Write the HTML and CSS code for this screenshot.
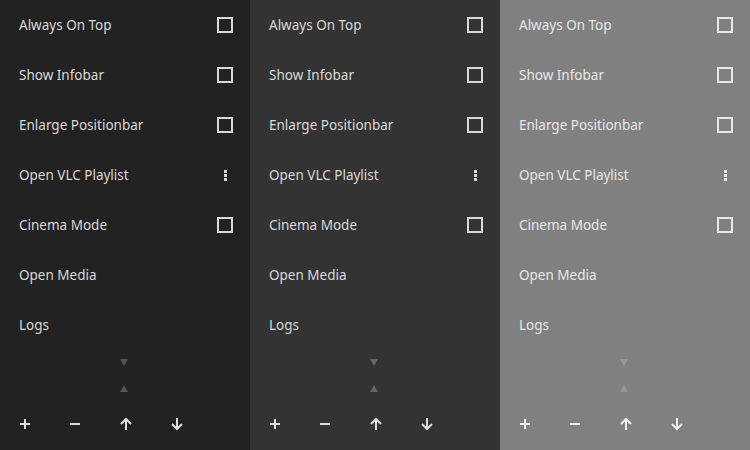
FILE: index.html
```html
<!DOCTYPE html>
<html>
<head>
<meta charset="utf-8">
<link rel="stylesheet" href="styles.css">
</head>
<body>
<div class="panels">
  <div class="panel p1">
    <div class="row"><span>Always On Top</span><span class="cb"></span></div>
    <div class="row"><span>Show Infobar</span><span class="cb"></span></div>
    <div class="row"><span>Enlarge Positionbar</span><span class="cb"></span></div>
    <div class="row"><span>Open VLC Playlist</span><span class="dots"><i></i><i></i><i></i></span></div>
    <div class="row"><span>Cinema Mode</span><span class="cb"></span></div>
    <div class="row"><span>Open Media</span></div>
    <div class="row"><span>Logs</span></div>
    <div class="tri"><span class="down"></span><span class="up"></span></div>
    <div class="tools">
      <span class="tool"><svg width="12" height="12" viewBox="0 0 12 12"><path d="M6 1v10M1 6h10" stroke="currentColor" stroke-width="2"/></svg></span>
      <span class="tool"><svg width="12" height="12" viewBox="0 0 12 12"><path d="M1 6h10" stroke="currentColor" stroke-width="2"/></svg></span>
      <span class="tool"><svg width="12" height="14" viewBox="0 0 12 14"><path d="M6 13V2M1 7l5-5 5 5" stroke="currentColor" stroke-width="2" fill="none"/></svg></span>
      <span class="tool"><svg width="12" height="14" viewBox="0 0 12 14"><path d="M6 1v11M1 7l5 5 5-5" stroke="currentColor" stroke-width="2" fill="none"/></svg></span>
    </div>
  </div>
  <div class="panel p2">
    <div class="row"><span>Always On Top</span><span class="cb"></span></div>
    <div class="row"><span>Show Infobar</span><span class="cb"></span></div>
    <div class="row"><span>Enlarge Positionbar</span><span class="cb"></span></div>
    <div class="row"><span>Open VLC Playlist</span><span class="dots"><i></i><i></i><i></i></span></div>
    <div class="row"><span>Cinema Mode</span><span class="cb"></span></div>
    <div class="row"><span>Open Media</span></div>
    <div class="row"><span>Logs</span></div>
    <div class="tri"><span class="down"></span><span class="up"></span></div>
    <div class="tools">
      <span class="tool"><svg width="12" height="12" viewBox="0 0 12 12"><path d="M6 1v10M1 6h10" stroke="currentColor" stroke-width="2"/></svg></span>
      <span class="tool"><svg width="12" height="12" viewBox="0 0 12 12"><path d="M1 6h10" stroke="currentColor" stroke-width="2"/></svg></span>
      <span class="tool"><svg width="12" height="14" viewBox="0 0 12 14"><path d="M6 13V2M1 7l5-5 5 5" stroke="currentColor" stroke-width="2" fill="none"/></svg></span>
      <span class="tool"><svg width="12" height="14" viewBox="0 0 12 14"><path d="M6 1v11M1 7l5 5 5-5" stroke="currentColor" stroke-width="2" fill="none"/></svg></span>
    </div>
  </div>
  <div class="panel p3">
    <div class="row"><span>Always On Top</span><span class="cb"></span></div>
    <div class="row"><span>Show Infobar</span><span class="cb"></span></div>
    <div class="row"><span>Enlarge Positionbar</span><span class="cb"></span></div>
    <div class="row"><span>Open VLC Playlist</span><span class="dots"><i></i><i></i><i></i></span></div>
    <div class="row"><span>Cinema Mode</span><span class="cb"></span></div>
    <div class="row"><span>Open Media</span></div>
    <div class="row"><span>Logs</span></div>
    <div class="tri"><span class="down"></span><span class="up"></span></div>
    <div class="tools">
      <span class="tool"><svg width="12" height="12" viewBox="0 0 12 12"><path d="M6 1v10M1 6h10" stroke="currentColor" stroke-width="2"/></svg></span>
      <span class="tool"><svg width="12" height="12" viewBox="0 0 12 12"><path d="M1 6h10" stroke="currentColor" stroke-width="2"/></svg></span>
      <span class="tool"><svg width="12" height="14" viewBox="0 0 12 14"><path d="M6 13V2M1 7l5-5 5 5" stroke="currentColor" stroke-width="2" fill="none"/></svg></span>
      <span class="tool"><svg width="12" height="14" viewBox="0 0 12 14"><path d="M6 1v11M1 7l5 5 5-5" stroke="currentColor" stroke-width="2" fill="none"/></svg></span>
    </div>
  </div>
</div>
</body>
</html>
```
FILE: styles.css
```css
html, body { margin: 0; padding: 0; }
body { width: 750px; height: 450px; overflow: hidden; font-family: "Noto Sans", "Open Sans", sans-serif; font-size: 13.5px; }
.panels { display: flex; height: 450px; }
.panel { width: 250px; height: 450px; display: flex; flex-direction: column; color: #d9d9d9; }
.p1 { background: #222222; }
.p2 { background: #333333; }
.p3 { background: #808080; color: #e8e8e8; }
.row { height: 50px; box-sizing: border-box; display: flex; align-items: center; justify-content: space-between; padding: 0 17px 1px 19px; }
.cb { width: 12px; height: 12px; border: 2px solid currentColor; margin-top: 1px; }
.dots { width: 16px; display: flex; flex-direction: column; align-items: center; gap: 1px; margin-top: 1px; }
.dots i { display: block; width: 3px; height: 3px; background: currentColor; }
.tri { display: flex; flex-direction: column; align-items: center; width: 250px; padding-top: 9px; }
.tri span { width: 0; height: 0; border-left: 4.5px solid transparent; border-right: 4.5px solid transparent; }
.tri .down { border-top: 7px solid #555; margin-left: -2px; }
.tri .up { border-bottom: 7px solid #555; margin-top: 19px; margin-left: -2px; }
.p2 .tri .down { border-top-color: #666; }
.p2 .tri .up { border-bottom-color: #666; }
.p3 .tri .down { border-top-color: #999; }
.p3 .tri .up { border-bottom-color: #999; }
.tools { display: flex; margin-top: 25px; }
.tool { width: 50px; height: 14px; display: flex; align-items: center; justify-content: center; color: #ddd; }
.tool:nth-child(n+3) { padding-left: 1px; }
.p3 .tool { color: #eee; }
```
